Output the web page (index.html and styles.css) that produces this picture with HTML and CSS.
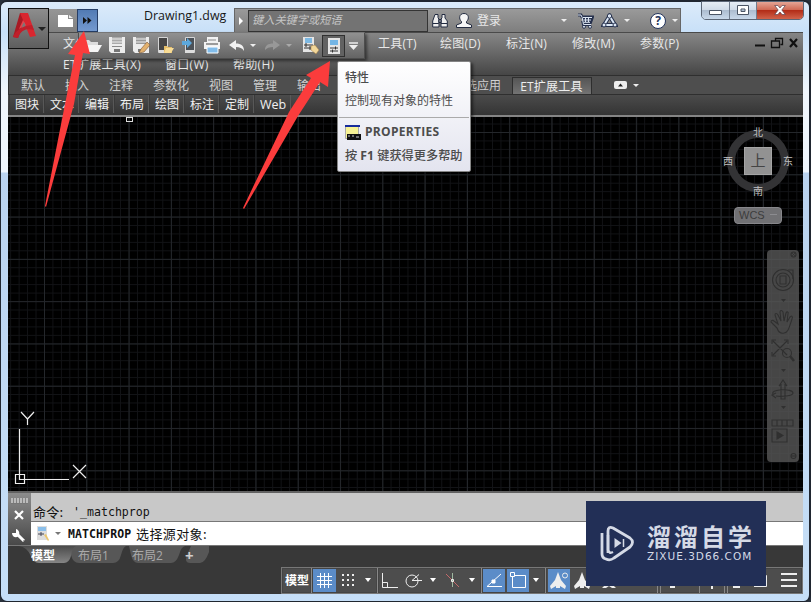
FILE: index.html
```
<!DOCTYPE html>
<html lang="zh-CN">
<head>
    <meta charset="UTF-8">
    <meta name="viewport" content="width=device-width, initial-scale=1.0">
    <title>Drawing1.dwg</title>
    <link rel="stylesheet" href="styles.css">
</head>
<body>
<div class="window">
    <header class="titlebar">
        <div class="quick-start">
            <svg width="18" height="14" viewBox="0 0 18 14"><path d="M1 1h10v4h5v8H1z" fill="#fff"/><path d="M12 1l4 3h-4z" fill="#eee"/></svg>
            <div class="more-btn"><svg width="9" height="7" viewBox="0 0 9 7"><path d="M0 0l4 3.5L0 7zM4.5 0l4 3.5-4 3.5z" fill="#111"/></svg></div>
        </div>
        <div class="title">Drawing1.dwg</div>
        <div class="infocenter">
            <div class="info-arrow"><svg width="4" height="8" viewBox="0 0 4 8"><path d="M0 0l4 4-4 4z" fill="#fff"/></svg></div>
            <div class="search">键入关键字或短语</div>
            <svg class="binoculars" width="16" height="16" viewBox="0 0 16 16" fill="#eee" stroke="#222b40"><path d="M3 1.500h3v3l1 2v7.500H.7V8zM10 1.500h3V5l2.300 3v6H9V6.500l1-2zM6.800 6.500h2.400v3H6.800zM1 10.500h5.800M9 10.500h6"/></svg>
            <svg class="user" width="18" height="17" viewBox="0 0 18 17" fill="#f6f6f6" stroke="#222b40"><path d="M6.500 9.500C3.500 7 4 1.500 9 1.500s5.500 5.500 2.500 8v1.500l5 2v2.500h-15V13l5-2z"/></svg>
            <span class="login">登录</span>
            <i class="caret login-caret"></i>
            <svg class="cart" width="17" height="16" viewBox="0 0 17 16" fill="none"><path d="M1 2h3l1 2h10.500l-2 5.500H6l.5 2H14" stroke="#26314d" stroke-width="3"/><path d="M5 4h10.500l-2 5.500H6z" fill="#26314d"/><path d="M1 2h3l1.200 2.500L6.500 11.500H14M6 4.500h9M6.500 7h7.500M8.500 4v5M11.500 4v5M6.500 9.300h6.500" stroke="#dce6f3" stroke-width="1"/><g fill="#dce6f3" stroke="#26314d"><circle cx="7" cy="13.800" r="1.500"/><circle cx="13" cy="13.800" r="1.500"/></g></svg>
            <svg class="exchange" width="17" height="15" viewBox="0 0 17 15" fill="none" stroke="#26314d"><path d="M8.500 3L3 12h11z" stroke-width="4"/><path d="M8.500 3L3 12h11z" stroke="#dce8f6" stroke-width="2"/><g fill="#dce6f3"><circle cx="8.500" cy="3" r="2.200"/><circle cx="3" cy="12" r="2"/><circle cx="14" cy="12" r="2"/></g></svg>
            <i class="caret"></i>
            <div class="help">?</div>
            <i class="caret"></i>
        </div>
    </header>

    <div class="win-buttons">
        <div class="wb wb-min"><svg width="13" height="5" viewBox="0 0 13 5"><path d="M.5.500h12v4H.5z" fill="#fff" stroke="#4b5565"/></svg></div>
        <div class="wb wb-max"><svg width="12" height="10" viewBox="0 0 12 10" fill="#fff" stroke="#4b5565" fill-rule="evenodd"><path d="M.5.500h11v9H.5zM4 4h4v2.500H4z"/></svg></div>
        <div class="wb wb-close"><svg width="12" height="10" viewBox="0 0 12 10"><path d="M.7.500h3.200L6 3 8.100.500h3.200L7.800 5l3.500 4.500H8.100L6 7 3.900 9.500H.7L4.200 5z" fill="#fff" stroke="#5a4350" stroke-width=".7"/></svg></div>
    </div>

    <div class="app-btn">
        <svg width="25" height="28" viewBox="0 0 25 28"><path d="M8 2h7L6 27l-5-1z" fill="#a81a24"/><path d="M8 2h8l8 23-6 1-7-17z" fill="#d9262f"/><path d="M1 26c3-7 9-11 19-12l2 5c-8-2-13 0-16 8z" fill="#c01f2a"/><path d="M11 9l-4 9 7-4z" fill="#e8434a"/><path d="M12 11l-2.500 5 4-1.500z" fill="#787878"/></svg>
        <i class="caret-big"></i>
    </div>

    <nav class="menu">
        <div class="menu-row first">
            <span class="file">文件(F)</span>
            <span class="tools">工具(T)</span>
            <span class="draw">绘图(D)</span>
            <span class="draw">标注(N)</span>
            <span class="modify">修改(M)</span>
            <span class="param">参数(P)</span>
            <svg class="doc-buttons" width="44" height="12" viewBox="0 0 44 12" fill="none" stroke="#111"><path d="M0 8.500h10" stroke-width="2"/><path d="M20.500 3.500v-2h7v6h-2M16.500 4h8v6.500h-8z" stroke-width="1.300"/><path d="M35 2l7 8M42 2l-7 8" stroke-width="2.200"/></svg>
        </div>
        <div class="menu-row second">
            <span class="et">ET扩展工具(X)</span>
            <span class="win">窗口(W)</span>
            <span>帮助(H)</span>
        </div>
    </nav>

    <div class="quick-access">
        <svg width="20" height="16" viewBox="0 0 20 16"><path d="M1 13V2h5l2 2h7v3H6z" fill="#ddd"/><path d="M5 7h14l-4 7H1z" fill="#f5f5f5"/></svg>
        <svg class="save" width="17" height="17" viewBox="0 0 17 17"><path d="M0 0h16v16H2l-2-2z" fill="#ececec"/><path d="M3 0h10v7H3z" fill="#aaa"/><path d="M3 2h10M3 5h10" stroke="#eee"/><path d="M3 9h10v1H3z" fill="#888"/><path d="M5 12h6v3H5z" fill="#777"/></svg>
        <svg class="saveas" width="17" height="17" viewBox="0 0 17 17"><path d="M0 0h16v16H2l-2-2z" fill="#ececec"/><path d="M3 0h10v7H3z" fill="#999"/><path d="M3 2h10M3 5h10" stroke="#eee"/><path d="M5 12h6v3H5z" fill="#777"/><path d="M14 5l3 3-6 7-5 1 2-4z" fill="#e2b16e" stroke="#7b5536" stroke-width=".6"/></svg>
        <svg class="mobile" width="16" height="17" viewBox="0 0 16 17"><path d="M.5.500h9v15h-9z" fill="#454545" stroke="#d5d5d5"/><path d="M1 13h9v3H1z" fill="#ddd"/><path d="M6 9h3l1 1h4v6H6z" fill="#e4bd68"/><path d="M8 11h8l-3 5H6z" fill="#f8dc95"/></svg>
        <svg class="mobile2" width="13" height="17" viewBox="0 0 13 17"><path d="M3.500.500h9v15h-9z" fill="#4c5258" stroke="#d5d5d5"/><path d="M3 13h9v3H3z" fill="#ddd"/><path d="M0 4h5V1l5 5-5 5V8H0z" fill="#5da8dc"/></svg>
        <svg class="print" width="17" height="17" viewBox="0 0 17 17"><path d="M3 0h11v5H3zM0 5h16v7H0z" fill="#f2f2f2"/><path d="M4 3h8" stroke="#888"/><path d="M2 7h12" stroke="#444"/><path d="M3 10h11v6H3z" fill="#82bdeb" stroke="#fff"/></svg>
        <svg class="undo" width="16" height="12" viewBox="0 0 16 12"><path d="M0 5l7-5v3.500c5 0 8 2 8 7.500-2-3-4-4-8-4V10z" fill="#f2f2f2"/></svg>
        <i class="caret"></i>
        <svg class="redo" width="16" height="12" viewBox="0 0 16 12"><path d="M16 5L9 0v3.500c-5 0-8 2-8 6.500 2-2 4-3 8-3V10z" fill="#989898"/></svg>
        <i class="caret faded"></i>
        <svg class="match" width="17" height="17" viewBox="0 0 17 17"><path d="M1 0h11v15H1z" fill="#e5e5e5"/><path d="M3 1h7v5H3z" fill="#7eb9e3"/><path d="M2 8h9M2 11h9M4 6v4M8 9v4" stroke="#333"/><path d="M9 9l4-1 4 5-3 4-5-4z" fill="#f2d79a" stroke="#a27b40" stroke-width=".5"/></svg>
        <div class="active-tool"><svg width="12" height="16" viewBox="0 0 12 16"><path d="M0 0h12v16H0z" fill="#e5e5e5"/><path d="M2 2h8v5H2z" fill="#73b5e5"/><path d="M2 10h8M2 13h8M7.500 8.500v3M4.500 11.500v3" stroke="#333"/></svg></div>
        <svg class="custom" width="9" height="8" viewBox="0 0 9 8"><path d="M0 1h9" stroke="#eee" stroke-width="1.500"/><path d="M0 3h9L4.500 8z" fill="#eee"/></svg>
    </div>

    <div class="tabs">
        <span>默认</span><span>插入</span><span>注释</span><span>参数化</span><span>视图</span><span>管理</span><span>输出</span><span class="apps">选应用</span><span class="tab-active">ET扩展工具</span>
        <div class="ribbon-toggle"><svg width="13" height="8" viewBox="0 0 13 8"><rect width="13" height="8" rx="2" fill="#eee"/><path d="M4 5.500h5L6.500 2.500z" fill="#222"/></svg><i class="caret"></i></div>
    </div>
    <div class="panels">
        <span>图块</span><span>文本</span><span>编辑</span><span>布局</span><span>绘图</span><span>标注</span><span>定制</span><span class="web">Web</span>
    </div>

    <main class="canvas">
        <div class="panel-grip"></div>
        <svg class="ucs" width="80" height="80" viewBox="0 0 80 80" fill="none" stroke="#eee" stroke-width="1.200"><path d="M11.500 22v50.500H61M7.500 67.500h9v9h-9z"/><path d="M13 5l6.500 7L26 5M19.500 12v6M65 58l13 13M78 58L65 71"/></svg>

        <div class="viewcube">
            <span class="north">北</span>
            <span class="west">西</span>
            <div class="cube">上</div>
            <span class="east">东</span>
            <span class="south">南</span>
        </div>
        <div class="wcs">WCS <i></i></div>

        <div class="navbar">
            <svg width="32" height="212" viewBox="0 0 32 212" fill="none" stroke="#303030" stroke-width="1.100">
                <circle cx="26.500" cy="4.500" r="2.500"/><path d="M25 3l3 3M28 3l-3 3" stroke-width=".8"/>
                <circle cx="16" cy="30" r="10.500"/><circle cx="16" cy="30" r="7"/><path d="M13 26h6v8h-6zM21 20h5v9"/>
                <path d="M14 49h5l-2.500 3zM14 119h5l-2.500 3zM14 156h5l-2.500 3z" fill="#303030" stroke="none"/>
                <path d="M10 78l-6-6c0-2 2-2 3-1l4 3-3-9c0-2 2-2 3 0l3 6-1-9c0-2 2-2 3 0l1 9 2-8c1-2 3-1 2 1l-1 8 3-5c2-2 3 0 2 2-3 9-4 14-8 14-4 1-6-2-7-5z"/>
                <path d="M6 91l14 14M20 91L6 105M5 94v-4h4M17 90h4v4M5 102v4h4"/><circle cx="20" cy="103" r="4.500"/><path d="M23 106l4 5" stroke-width="2.500"/>
                <path d="M14 149v-15l-2 2 4-6 4 6-2-2v15zM6 144c-3-5 20-6 20-1 0 3-12 4-17 3M9 143l-4 2 4 3"/>
                <path d="M5 170h21v6H5zM10 170v6M15 170v6M20 170v6M5 179h15v13H5z"/><path d="M10 182v7l6-3.500z" fill="#303030"/>
                <circle cx="26.500" cy="206" r="2.500"/><path d="M24 206h5"/>
            </svg>
        </div>
    </main>

    <section class="command">
        <div class="cmd-side">
            <div class="dots"></div>
            <svg width="10" height="10" viewBox="0 0 10 10"><path d="M1 1l8 8M9 1L1 9" stroke="#fff" stroke-width="2.200"/></svg>
            <svg width="14" height="14" viewBox="0 0 14 14"><path d="M5 5l7 7" stroke="#fff" stroke-width="3"/><path d="M4 0v4H0c0 4 4 5 6 3.500S8 1 4 0z" fill="#fff"/><path d="M11.500 11.500h1" stroke="#555"/></svg>
        </div>
        <div class="cmd-main">
            <div class="history"><span class="cn">命令:</span><span class="entry">'_matchprop</span></div>
            <div class="prompt">
                <svg width="14" height="16" viewBox="0 0 14 16"><path d="M1 0h10v14H1z" fill="#ddd"/><path d="M2 1h8v4H2z" fill="#8bbfea"/><path d="M2 8h6M5 6v4" stroke="#445"/><path d="M8 9l2-1 3 6-1 1z" fill="#ecc66e"/></svg>
                <i class="caret"></i><b>MATCHPROP</b><span class="cn">选择源对象:</span>
            </div>
        </div>
    </section>

    <footer class="bottom">
        <div class="layouts">
            <svg class="tab-shapes" width="190" height="17" viewBox="0 0 190 17">
                <defs><linearGradient id="tab" x1="0" y1="0" x2="0" y2="1"><stop offset="0" stop-color="#4b4b4b"/><stop offset="1" stop-color="#858585"/></linearGradient></defs>
                <path d="M50 0h57q-3 1-5 9-2 8-8 8H60q-6 0-8-8zM110 0h56q-4 1-6 9-3 8-8 8h-33q-5 0-7-8zM172 0h18v6q-4 11-9 11h-10q-6 0-3-8z" fill="#575757"/>
                <path d="M0 0h57q-4 1-5 10-2 7-7 7H20q-6 0-8-7Q8 1 0 0z" fill="url(#tab)"/>
            </svg>
            <span class="current">模型</span><span>布局1</span><span>布局2</span><span class="plus">+</span>
        </div>
        <div class="status">
            <div class="group model">模型</div>
            <div class="group">
                <svg class="on" width="23" height="23" viewBox="0 0 23 23" stroke="#fff"><path d="M4 7.500h15M4 11.500h15M4 15.500h15M7.500 4v15M11.500 4v15M15.500 4v15"/></svg>
                <svg width="25" height="23" viewBox="0 0 25 23" fill="#eee"><path d="M6 5h2v2H6zM11 5h2v2h-2zM16 5h2v2h-2zM6 10h2v2H6zM11 10h2v2h-2zM16 10h2v2h-2zM6 15h2v2H6zM11 15h2v2h-2zM16 15h2v2h-2z"/></svg>
                <i class="caret-light"></i>
            </div>
            <div class="group">
                <svg width="23" height="23" viewBox="0 0 23 23" fill="none" stroke="#eee"><path d="M3.500 4v14.500H19M3.500 13.500h5v5"/></svg>
                <svg width="24" height="23" viewBox="0 0 24 23" fill="none" stroke="#eee"><circle cx="10" cy="12" r="6"/><path d="M10 11.500h10M10 11.500l7-6"/></svg>
                <i class="caret-light"></i>
                <svg width="24" height="23" viewBox="0 0 24 23" fill="none"><path d="M5 5l13 13" stroke="#c46a6a"/><path d="M11.500 4v14" stroke="#9fb8a0"/><path d="M10.500 10.500h2v2h-2z" stroke="#eee"/></svg>
                <i class="caret-light"></i>
            </div>
            <div class="group">
                <svg class="on" width="22" height="23" viewBox="0 0 22 23" fill="none" stroke="#fff"><path d="M18 5L4 17.500h15"/><path d="M9 11h3v3H9z" fill="#fff"/></svg>
                <svg class="on gap" width="22" height="23" viewBox="0 0 22 23" fill="none" stroke="#fff"><path d="M3.500 3.500h4v4h-4zM8 6.500h10.500v12h-13V8"/></svg>
                <i class="caret-light"></i>
            </div>
            <div class="group rest">
                <svg class="on" width="22" height="23" viewBox="0 0 22 23" fill="#eee"><path d="M10 3l3 8 5 6-1 3-5-3v2H8v-2l-5 3-1-3 5-6z"/><circle cx="17" cy="6.500" r="2.500" fill="#5b8cc8" stroke="#eee"/></svg>
                <svg class="gap" width="24" height="23" viewBox="0 0 24 23" fill="#eee"><path d="M10 3l3 8 5 6-1 3-5-3v2H8v-2l-5 3-1-3 5-6zM15 5h5l-4 6z"/></svg>
                <svg class="gap" width="22" height="23" viewBox="0 0 22 23" fill="#eee"><path d="M11 8l2 6 5 5h-4l-3-2-3 2H4l5-5z"/></svg>
                <svg class="tail" width="118" height="25" viewBox="0 0 118 25" fill="none" stroke="#888"><path d="M23.500 0v25M26.500 0v25M65.500 0v25M90.500 0v25M93.500 0v25"/><path d="M36 19h5M78 17v4M99 19h7" stroke="#eee" stroke-width="2"/></svg>
                <svg class="full" width="16" height="23" viewBox="0 0 16 23" fill="none" stroke="#eee"><path d="M2 6.500h12.500v11H2M9 12l4-4M9.500 8.500h3v3"/></svg>
                <svg class="burger" width="16" height="16" viewBox="0 0 16 16" stroke="#eee" stroke-width="2"><path d="M0 2h16M0 8h16M0 14h16"/></svg>
            </div>
        </div>
    </footer>

    <div class="tooltip">
        <h3>特性</h3>
        <p>控制现有对象的特性</p>
        <hr>
        <div class="tip-cmd"><svg width="16" height="15" viewBox="0 0 16 15"><path d="M.5.500h13v13H.5z" fill="#f8f395" stroke="#aaa"/><path d="M0 0h15v2H0z" fill="#172c9c"/><path d="M2 9h14v6H2z" fill="#111"/><path d="M3 11h2M7 11h2M11 12h3" stroke="#ccc"/></svg>PROPERTIES</div>
        <div class="tip-help">按 <b>F1</b> 键获得更多帮助</div>
    </div>

    <svg class="arrows" width="811" height="220" viewBox="0 0 811 220" fill="#fb3c3c">
        <path d="M84 31l6 23-7-1-9 51-28 103-1-1 20-102 10-49-7-1z"/>
        <path d="M330 61l-2 26-8-5-22 34-54 93-1-1 46-96 22-34-5-3z"/>
    </svg>

    <div class="watermark">
        <svg width="36" height="37" viewBox="0 0 36 37" fill="none" stroke="#d5dae6" stroke-linejoin="round"><path d="M8 28V6q0-5 5-3l17 10q5 4 0 9L14 33q-4 3-8 1-4-1-4-5V8" stroke-width="2.800"/><path d="M8 10v15q1 4 5 2" stroke-width="2.500"/><path d="M14.500 13v10l7-5z" fill="#d5dae6" stroke="none"/><path d="M23.500 14v8" stroke-width="1.500"/></svg>
        <div class="wm-text">
            <div class="wm-name">溜溜自学</div>
            <div class="wm-url">ZIXUE.3D66.COM</div>
        </div>
    </div>
</div>
</body>
</html>
```

FILE: styles.css
```
* {
    box-sizing: border-box;
}
body {
    margin: 0;
    background: #29313c;
    font-family: "Open Sans", "Noto Sans CJK SC", sans-serif;
    font-size: 12px;
    color: #e8e8e8;
    overflow: hidden;
}
svg {
    display: block;
    flex: none;
}
span, div {
    white-space: nowrap;
}
.window {
    position: relative;
    width: 811px;
    height: 602px;
    padding: 0 6px 0 7px;
    border: solid #202630;
    border-width: 2px 2px 1px 1px;
    border-radius: 7px;
    background: linear-gradient(#dcebfa 0, #c8e0f8 30px, #f0f6fc 90px, #eef5fc 170px, #b9d2ee 171px, #c6dff8 100%);
    display: flex;
    flex-direction: column;
}

/* title bar */
.titlebar {
    height: 30px;
    flex: none;
    display: flex;
    align-items: flex-end;
    padding-left: 41px;
}
.quick-start {
    width: 49px;
    height: 23px;
    display: flex;
    align-items: center;
    justify-content: space-between;
    padding-left: 8px;
    background: linear-gradient(#969696, #808080);
}
.more-btn {
    width: 21px;
    height: 23px;
    border: 1px solid #263e66;
    background: linear-gradient(#527bb4, #7399cf);
    display: flex;
    align-items: center;
    justify-content: center;
}
.title {
    width: 136px;
    padding: 0 0 7px 46px;
    color: #171717;
    font-size: 12.4px;
    line-height: 18px;
}
.infocenter {
    width: 447px;
    height: 24px;
    display: flex;
    align-items: center;
    background: linear-gradient(#9a9a9a, #7e7e7e);
    border: 1px solid #666;
    border-bottom: 0;
}
.info-arrow {
    width: 13px;
    padding-left: 4px;
}
.search {
    width: 180px;
    height: 22px;
    border: 1px solid #343434;
    background: #737373;
    color: #c5c5c5;
    font-style: italic;
    font-size: 11.2px;
    line-height: 18px;
    padding-left: 3px;
}
.binoculars {
    margin-left: 4px;
}
.user {
    margin-left: 7px;
}
.login {
    margin-left: 4px;
    margin-top: -1px;
}
.caret {
    flex: none;
    border: 3px solid transparent;
    border-top: 3px solid #eee;
    border-bottom: 0;
}
.caret.faded {
    border-top-color: #aaa;
}
.login-caret {
    margin-left: 60px;
}
.cart {
    margin-left: 10px;
}
.exchange {
    margin: 0 6px 0 7px;
}
.help {
    width: 16px;
    height: 16px;
    margin: 0 6px 0 20px;
    border: 1.5px solid #24345c;
    border-radius: 50%;
    background: #fff;
    color: #24345c;
    font-size: 12px;
    font-weight: bold;
    line-height: 13px;
    text-align: center;
}
.win-buttons {
    position: absolute;
    top: -1px;
    left: 700px;
    width: 103px;
    height: 19px;
    display: flex;
    border: 1px solid #5b6676;
    border-radius: 0 0 5px 5px;
    overflow: hidden;
}
.wb {
    display: flex;
    align-items: center;
    justify-content: center;
    padding-bottom: 1px;
    background: linear-gradient(#e6edf5 0, #d0dbe8 45%, #adbdd0 50%, #c8d8ea 100%);
}
.wb-min {
    width: 28px;
    padding-top: 5px;
    border-right: 1px solid #707c8d;
}
.wb-max {
    width: 27px;
    border-right: 1px solid #707c8d;
}
.wb-close {
    flex: 1;
    background: linear-gradient(#e5a596 0, #d06a55 45%, #b32d18 50%, #d0624a 100%);
}
.app-btn {
    position: absolute;
    z-index: 3;
    left: 7px;
    top: 6px;
    width: 41px;
    height: 41px;
    border: 1px solid #111;
    background: linear-gradient(#8d8d8d, #5e5e5e);
    display: flex;
    align-items: center;
    padding: 0 0 8px 3px;
    gap: 1px;
}
.caret-big {
    margin-top: 8px;
    border: 4px solid transparent;
    border-top: 4px solid #222;
    border-bottom: 0;
}

/* menus */
.menu {
    height: 43px;
    flex: none;
    border-top: 1px solid #4a4a4a;
    background: linear-gradient(#868686, #464646);
}
.menu-row {
    display: flex;
    height: 21px;
    line-height: 21px;
    letter-spacing: 0.2px;
}
.menu-row.second {
    letter-spacing: 0.3px;
}
.file {
    width: 315px;
    margin-left: 55px;
}
.tools {
    width: 62px;
}
.draw {
    width: 66px;
}
.modify {
    width: 68px;
}
.param {
    width: 115px;
}
.doc-buttons {
    margin-top: 4px;
}
.et {
    width: 102px;
    margin-left: 55px;
}
.win {
    width: 68px;
}
.quick-access {
    position: absolute;
    z-index: 2;
    left: 77px;
    top: 30px;
    width: 287px;
    height: 27px;
    padding-left: 4px;
    display: flex;
    align-items: center;
    background: linear-gradient(#919191, #646464);
    border: 1px solid #4d4d4d;
    border-top-color: #777;
    box-shadow: 2px 2px 3px rgba(0,0,0,0.5);
}
.save {
    margin-left: 6px;
}
.saveas {
    margin-left: 7px;
}
.mobile {
    margin-left: 8px;
}
.mobile2 {
    margin-left: 8px;
}
.print {
    margin-left: 9px;
}
.undo {
    margin: 0 5px 0 8px;
}
.redo {
    margin: 0 6px 0 8px;
}
.match {
    margin-left: 10px;
}
.active-tool {
    width: 23px;
    height: 22px;
    margin-left: 3px;
    border: 1px solid #303030;
    background: #626262;
    display: flex;
    align-items: center;
    justify-content: center;
}
.custom {
    margin-left: 4px;
}

/* ribbon */
.tabs {
    height: 20px;
    flex: none;
    display: flex;
    border: 1px solid #2f2f2f;
    border-right: 0;
    background: #4e4e4e;
    color: #d0d0d0;
    padding-left: 2px;
}
.tabs span {
    padding: 0 10px;
    line-height: 20px;
}
.tabs .apps {
    margin-left: 124px;
}
.tabs .tab-active {
    width: 80px;
    margin: 1px 0 0 1px;
    padding: 0 7px;
    line-height: 17px;
    letter-spacing: 0.2px;
    color: #eee;
    background: linear-gradient(#555, #737373);
    border: 1px solid #2e2e2e;
    border-bottom: 0;
}
.ribbon-toggle {
    display: flex;
    align-items: center;
    gap: 6px;
    margin-left: 22px;
}
.panels {
    height: 22px;
    flex: none;
    display: flex;
    background: linear-gradient(#4b4b4b, #343434);
    border-bottom: 2px solid #858585;
    padding: 0 0 0 1px;
}
.panels span {
    width: 35px;
    height: 18px;
    padding-left: 5px;
    line-height: 19px;
    color: #f0f0f0;
    border-left: 1px solid #3a3a3a;
    border-right: 1px solid #585858;
}
.panels .web {
    width: 37px;
    font-size: 12.5px;
}

/* drawing area */
.canvas {
    position: relative;
    height: 374px;
    flex: none;
    background-color: #000;
    background-image:
        linear-gradient(90deg, #24272b 1px, transparent 1px),
        linear-gradient(#24272b 1px, transparent 1px),
        linear-gradient(90deg, #121316 1px, transparent 1px),
        linear-gradient(#121316 1px, transparent 1px);
    background-size: 42.3px 100%, 100% 42.3px, 8.46px 100%, 100% 8.46px;
    background-position: 36px 0, 0 15px, 36px 0, 0 15px;
}
.panel-grip {
    position: absolute;
    left: 118px;
    top: 0;
    width: 7px;
    height: 5px;
    border: 1px solid #ddd;
}
.ucs {
    position: absolute;
    left: 0;
    top: 290px;
}
.viewcube {
    position: absolute;
    left: 719px;
    top: 13px;
    width: 62px;
    height: 62px;
    border: 8px solid #333335;
    border-radius: 50%;
    font-size: 10px;
    line-height: 12px;
    color: #c0c0c0;
}
.viewcube span {
    position: absolute;
}
.north {
    left: 18px;
    top: -12px;
}
.south {
    left: 18px;
    top: 47px;
}
.west {
    left: -12px;
    top: 17px;
}
.east {
    left: 48px;
    top: 17px;
}
.cube {
    width: 28px;
    height: 28px;
    margin: 9px;
    background: #929292;
    border: 1px solid #a5a5a5;
    color: #444;
    font-size: 15px;
    line-height: 24px;
    text-align: center;
}
.wcs {
    position: absolute;
    left: 726px;
    top: 90px;
    width: 48px;
    height: 17px;
    border: 1px solid #87878b;
    border-radius: 4px;
    background: #717174;
    color: #3c3c3c;
    font: 11px/15px "Liberation Sans", sans-serif;
    padding-left: 4px;
}
.wcs i {
    display: inline-block;
    width: 7px;
    height: 5px;
    margin-left: 2px;
    border-top: 1px solid #8c8c90;
}
.navbar {
    position: absolute;
    left: 759px;
    top: 133px;
    width: 32px;
    height: 212px;
    border-radius: 4px;
    background: rgba(88,88,88,0.8);
}

/* command line */
.command {
    height: 54px;
    flex: none;
    display: flex;
    border-top: 2px solid #616161;
    background: #c8c8c8;
    color: #111;
    font-family: "DejaVu Sans Mono", "Noto Sans CJK SC", monospace;
    font-size: 11px;
}
.cmd-side {
    width: 23px;
    background: linear-gradient(#8c8c8c, #484848);
    display: flex;
    flex-direction: column;
    align-items: center;
    gap: 9px;
    padding: 5px 1px 0 0;
}
.dots {
    width: 17px;
    height: 6px;
    background: repeating-linear-gradient(90deg, #bbb 0 2px, transparent 2px 3px);
    border-bottom: 1px solid #777;
    margin-bottom: -3px;
}
.cmd-main {
    flex: 1;
}
.history {
    height: 29px;
    display: flex;
    padding: 10px 0 0 2px;
    line-height: 17px;
    border-bottom: 1px solid #777;
}
.history .cn {
    width: 40px;
    letter-spacing: 0.3px;
    line-height: 17px;
}
.entry {
    font-size: 11.6px;
    line-height: 18px;
}
.cn {
    font-family: "Noto Sans CJK SC", sans-serif;
    font-size: 13px;
}
.prompt {
    height: 23px;
    display: flex;
    align-items: center;
    padding-left: 5px;
    background: #fff;
    line-height: 20px;
}
.prompt .caret {
    margin: 0 7px 0 5px;
    border-top-color: #777;
}
.prompt b {
    width: 68px;
    font-size: 11.5px;
    letter-spacing: 0.1px;
}
.prompt .cn {
    letter-spacing: 0.4px;
}

/* layout tabs and status bar */
.bottom {
    height: 49px;
    flex: none;
    display: flex;
    flex-direction: column;
    justify-content: space-between;
    background: #383838;
    border-top: 1px solid #777;
}
.layouts {
    position: relative;
    display: flex;
    height: 18px;
    padding-left: 23px;
    color: #aaa;
    line-height: 19px;
}
.layouts span {
    position: relative;
    width: 54px;
}
.layouts .current {
    width: 47px;
    color: #fff;
    font-weight: bold;
}
.layouts .plus {
    margin-left: -1px;
    color: #d0d0d0;
    font-size: 15px;
    font-weight: bold;
}
.tab-shapes {
    position: absolute;
    left: 11px;
    top: 0;
}
.status {
    display: flex;
    align-self: flex-end;
    width: 522px;
    height: 27px;
    background: #888;
    border: 1px solid #777;
    gap: 1px;
}
.group {
    display: flex;
    align-items: center;
    padding-bottom: 1px;
    background: #4d4d4d;
    border: 1px solid #444;
}
.model {
    width: 29px;
    padding: 0 0 2px 2px;
    color: #fff;
    font-weight: bold;
}
.on {
    background: #5b8cc8;
}
.gap {
    margin-left: 2px;
}
.caret-light {
    margin: 0 5px 0 4px;
    border: 3.5px solid transparent;
    border-top: 4px solid #fff;
    border-bottom: 0;
}
.rest {
    flex: 1;
    padding-left: 1px;
}
.tail {
    margin-left: 14px;
}
.burger {
    margin: 0 4px 0 auto;
}

/* overlays */
.tooltip {
    position: absolute;
    z-index: 4;
    left: 336px;
    top: 59px;
    width: 134px;
    height: 111px;
    padding: 8px 7px;
    border: 1px solid #858585;
    border-radius: 2px;
    background: linear-gradient(#fff, #e3e4ef);
    box-shadow: 2px 2px 3px rgba(0,0,0,0.5);
    color: #4c4c4c;
    line-height: 16px;
}
.tooltip h3 {
    margin: 0 0 7px;
    font-size: 12px;
    font-weight: 500;
}
.tooltip p {
    margin: 0;
    line-height: 16px;
}
.tooltip hr {
    margin: 8px -6px 6px;
    border: 0;
    border-top: 1px solid #aaa;
}
.tip-cmd {
    display: flex;
    align-items: center;
    gap: 4px;
    font-weight: bold;
    letter-spacing: 0.3px;
}
.tip-help {
    margin-top: 8px;
    font-size: 12.2px;
    font-weight: 500;
}
.arrows {
    position: absolute;
    z-index: 5;
    left: -1px;
    top: -2px;
}
.watermark {
    position: absolute;
    z-index: 6;
    left: 585px;
    top: 499px;
    width: 180px;
    height: 85px;
    padding-left: 14px;
    display: flex;
    align-items: center;
    gap: 11px;
    background: #222f56;
    color: #d5dae6;
}
.wm-text {
    display: flex;
    flex-direction: column;
}
.wm-name {
    font: bold 24px/26px "Noto Sans CJK SC", sans-serif;
    letter-spacing: 3px;
    margin-top: -2px;
}
.wm-url {
    margin-top: 1px;
    font: 10.5px/12px "DejaVu Sans", sans-serif;
    letter-spacing: 1px;
}
```
